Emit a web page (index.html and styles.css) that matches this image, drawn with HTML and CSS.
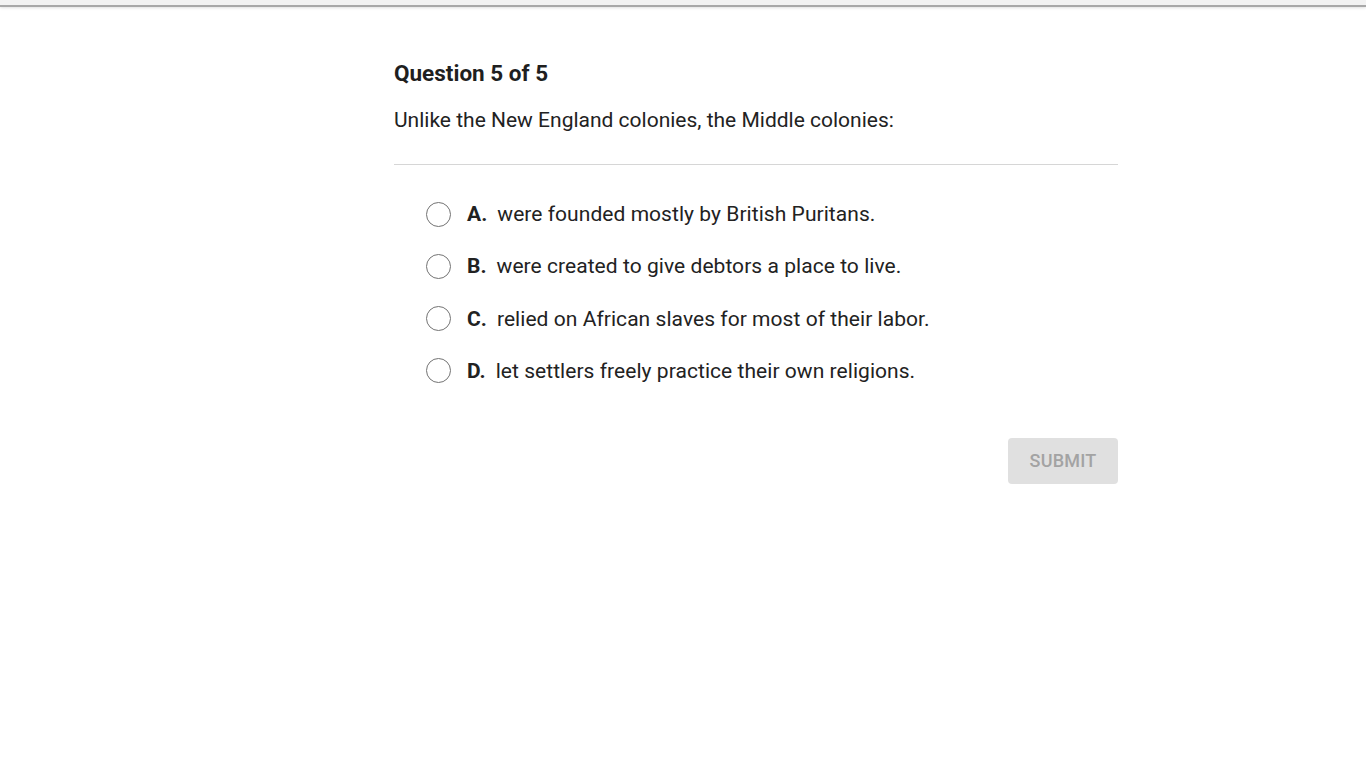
FILE: index.html
```html
<!DOCTYPE html>
<html>
<head>
<meta charset="utf-8">
<link rel="stylesheet" href="styles.css">
</head>
<body>
<div class="topbar"></div>
<main class="quiz">
  <h1 class="qnum">Question 5 of 5</h1>
  <p class="qtext">Unlike the New England colonies, the Middle colonies:</p>
  <hr class="divider">
  <ul class="options">
    <li class="option"><span class="radio"></span><span class="letter">A.</span><span class="otext">were founded mostly by British Puritans.</span></li>
    <li class="option"><span class="radio"></span><span class="letter">B.</span><span class="otext">were created to give debtors a place to live.</span></li>
    <li class="option"><span class="radio"></span><span class="letter">C.</span><span class="otext">relied on African slaves for most of their labor.</span></li>
    <li class="option"><span class="radio"></span><span class="letter">D.</span><span class="otext">let settlers freely practice their own religions.</span></li>
  </ul>
  <div class="actions"><button class="submit">SUBMIT</button></div>
</main>
</body>
</html>
```
FILE: styles.css
```css
html, body {
  margin: 0;
  padding: 0;
  background: #fff;
  font-family: Roboto, "Noto Sans", sans-serif;
  color: #222;
}
.topbar {
  height: 5px;
  background: #f2f2f2;
  border-bottom: 2px solid #a8a8a8;
  box-shadow: 0 1px 3px rgba(0,0,0,0.12);
}
.quiz {
  width: 724px;
  margin: 0 0 0 394px;
}
.qnum {
  margin: 52px 0 0;
  font-size: 22.5px;
  font-weight: 700;
  line-height: 28px;
  color: #1f1f1f;
}
.qtext {
  margin: 19px 0 0;
  font-size: 21px;
  line-height: 28px;
  color: #222;
}
.divider {
  border: 0;
  border-top: 1px solid #d6d6d6;
  margin: 30px 0 0;
}
.options {
  list-style: none;
  margin: 35px 0 0;
  padding: 0 0 0 32px;
  display: flex;
  flex-direction: column;
  gap: 24.3px;
}
.option {
  display: flex;
  align-items: center;
  height: 28px;
  font-size: 21px;
  letter-spacing: 0.05px;
}
.radio {
  width: 23px;
  height: 23px;
  border: 1.5px solid #737373;
  border-radius: 50%;
  flex: none;
  margin-right: 16px;
}
.letter {
  font-weight: 700;
  margin-right: 10px;
  color: #222;
}
.otext {
  color: #222;
}
.actions {
  display: flex;
  justify-content: flex-end;
  margin-top: 53px;
}
.submit {
  width: 110px;
  height: 46px;
  border: 0;
  border-radius: 4px;
  background: #e0e0e0;
  color: #a3a3a3;
  font-family: Roboto, sans-serif;
  font-size: 18px;
  font-weight: 500;
  letter-spacing: 0.2px;
}
```
